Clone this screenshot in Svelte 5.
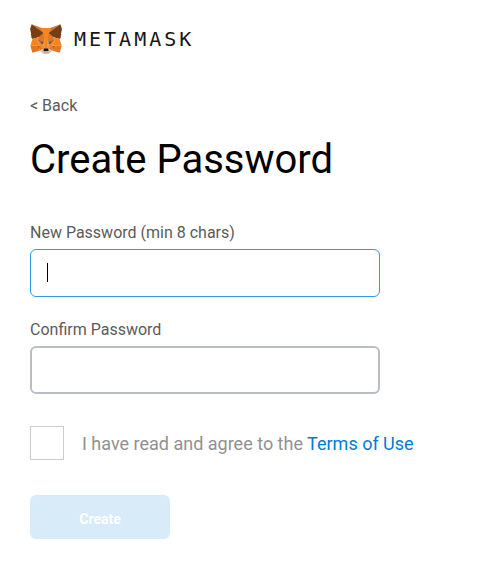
<script>
  let password = $state('');
  let confirmation = $state('');
  let agreed = $state(false);

  const fox = [
    ['#e2761b', '274.1,35.5 174.6,109.4 193,65.8'],
    ['#e4761b', '44.4,35.5 143.1,110.1 125.6,65.8'],
    ['#e4761b', '238.3,206.8 211.8,247.4 268.5,263 284.8,207.7'],
    ['#e4761b', '33.9,207.7 50.1,263 106.8,247.4 80.3,206.8'],
    ['#e4761b', '103.6,138.2 87.8,162.1 144.1,164.6 142.1,104.1'],
    ['#e4761b', '214.9,138.2 175.9,103.4 174.6,164.6 230.8,162.1'],
    ['#e4761b', '106.8,247.4 140.6,230.9 111.4,208.1'],
    ['#e4761b', '177.9,230.9 211.8,247.4 207.1,208.1'],
    ['#d7c1b3', '211.8,247.4 177.9,230.9 180.6,253 180.3,262.3'],
    ['#d7c1b3', '106.8,247.4 138.3,262.3 138.1,253 140.6,230.9'],
    ['#cd6116', '106.8,247.4 111.6,206.8 80.3,207.7'],
    ['#cd6116', '207,206.8 211.8,247.4 238.3,207.7'],
    ['#cd6116', '230.8,162.1 174.6,164.6 179.8,193.5 188.1,176.1 208.1,185.2'],
    ['#cd6116', '110.6,185.2 130.6,176.1 138.8,193.5 144.1,164.6 87.8,162.1'],
    ['#e4751f', '87.8,162.1 111.4,208.1 110.6,185.2'],
    ['#e4751f', '208.1,185.2 207.1,208.1 230.8,162.1'],
    ['#e4751f', '144.1,164.6 138.8,193.5 145.4,227.6 146.9,182.7'],
    ['#e4751f', '174.6,164.6 171.9,182.6 173.1,227.6 179.8,193.5'],
    ['#f6851b', '179.8,193.5 173.1,227.6 177.9,230.9 207.1,208.1 208.1,185.2'],
    ['#f6851b', '110.6,185.2 111.4,208.1 140.6,230.9 145.4,227.6 138.8,193.5'],
    ['#233447', '138.8,193.5 110.6,185.2 130.5,176.1'],
    ['#233447', '179.7,193.5 188,176.1 208,185.2'],
    ['#c0ad9e', '180.3,262.3 180.6,253 178.1,250.8 140.4,250.8 138.1,253 138.3,262.3 106.8,247.4 117.8,256.4 140.1,271.9 178.4,271.9 200.8,256.4 211.8,247.4'],
    ['#161616', '177.9,230.9 173.1,227.6 145.4,227.6 140.6,230.9 138.1,253 140.4,250.8 178.1,250.8 180.6,253'],
    ['#763d16', '278.3,114.2 286.8,73.4 274.1,35.5 177.9,106.9 214.9,138.2 267.2,153.5 278.8,140 273.8,136.4 281.8,129.1 275.6,124.3 283.6,118.2'],
    ['#763d16', '31.8,73.4 40.3,114.2 34.9,118.2 42.9,124.3 36.8,129.1 44.8,136.4 39.8,140 51.3,153.5 103.6,138.2 140.6,106.9 44.4,35.5'],
    ['#f6851b', '267.2,153.5 214.9,138.2 230.8,162.1 207.1,208.1 238.3,207.7 284.8,207.7'],
    ['#f6851b', '103.6,138.2 51.3,153.5 33.9,207.7 80.3,207.7 111.4,208.1 87.8,162.1'],
    ['#f6851b', '174.6,164.6 177.9,106.9 193.1,65.8 125.6,65.8 140.6,106.9 144.1,164.6 145.3,182.8 145.4,227.6 173.1,227.6 173.3,182.8']
  ];
</script>

<main>
  <header>
    <svg class="fox" viewBox="31 35 256 238" aria-hidden="true">
      {#each fox as [fill, points]}
        <polygon {fill} {points} />
      {/each}
    </svg>
    <span class="wordmark">METAMASK</span>
  </header>

  <a class="back" href="#back">&lt; Back</a>
  <h1>Create Password</h1>

  <form onsubmit={(e) => e.preventDefault()}>
    <div class="field">
      <label for="new-password">New Password (min 8 chars)</label>
      <div class="box">
        <input id="new-password" class="active" type="password" bind:value={password} />
        {#if !password}<span class="caret"></span>{/if}
      </div>
    </div>
    <div class="field">
      <label for="confirm-password">Confirm Password</label>
      <div class="box">
        <input id="confirm-password" type="password" bind:value={confirmation} />
      </div>
    </div>
    <div class="terms">
      <input id="terms" type="checkbox" bind:checked={agreed} />
      <label for="terms">I have read and agree to the <a href="#terms-of-use">Terms of Use</a></label>
    </div>
    <button type="submit" disabled={!agreed || password.length < 8 || password !== confirmation}>Create</button>
  </form>
</main>

<style>
  :global(body) {
    background: #fff;
  }
  main {
    box-sizing: border-box;
    padding: 23px 30px 32px;
    font-family: Roboto, 'Liberation Sans', sans-serif;
    color: #000;
  }
  header {
    display: flex;
    align-items: center;
    gap: 12px;
  }
  .fox {
    width: 32px;
    height: 30px;
  }
  .wordmark {
    font: 20px/32px 'DejaVu Sans Mono', monospace;
    letter-spacing: 3px;
    color: #161616;
  }
  .back {
    display: block;
    width: fit-content;
    margin-top: 41px;
    font-size: 16px;
    line-height: 20px;
    color: #5b5b5b;
    text-decoration: none;
  }
  h1 {
    margin: 18px 0 0;
    font-size: 40px;
    line-height: 52px;
    font-weight: 400;
  }
  form {
    display: flex;
    flex-direction: column;
    align-items: flex-start;
    margin-top: 37px;
  }
  .field {
    width: 100%;
    max-width: 350px;
    margin-bottom: 23px;
  }
  .field label {
    display: block;
    margin-bottom: 6px;
    font-size: 16px;
    line-height: 20px;
    color: #5b5b5b;
  }
  .box {
    position: relative;
  }
  .box input {
    display: block;
    box-sizing: border-box;
    width: 100%;
    height: 48px;
    padding: 0 15px;
    border: 2px solid #babec2;
    border-radius: 6px;
    outline: none;
    background: #fff;
    font: 16px Roboto, sans-serif;
  }
  .box input.active {
    padding: 0 16px;
    border: 1px solid #2f9ae0;
  }
  .caret {
    position: absolute;
    left: 17px;
    top: 14px;
    width: 1px;
    height: 19px;
    background: #000;
    pointer-events: none;
  }
  .terms {
    display: flex;
    align-items: center;
    gap: 18px;
    margin: 9px 0 35px;
  }
  .terms input {
    appearance: none;
    box-sizing: border-box;
    flex: none;
    width: 34px;
    height: 34px;
    margin: 0;
    border: 1px solid #cdcdcd;
    background: #fff;
  }
  .terms input:checked {
    background: #1b7fd6;
    box-shadow: inset 0 0 0 6px #fff;
  }
  .terms label {
    padding-top: 2px;
    font-size: 18px;
    line-height: 24px;
    color: #939090;
  }
  .terms a {
    color: #027bd8;
    text-decoration: none;
  }
  button {
    width: 140px;
    height: 44px;
    padding: 4px 0 0;
    border: 0;
    border-radius: 6px;
    background: #1b93e4;
    color: #fff;
    font: 700 14px/20px Roboto, sans-serif;
  }
  button:disabled {
    background: #d7ebf9;
  }
</style>
